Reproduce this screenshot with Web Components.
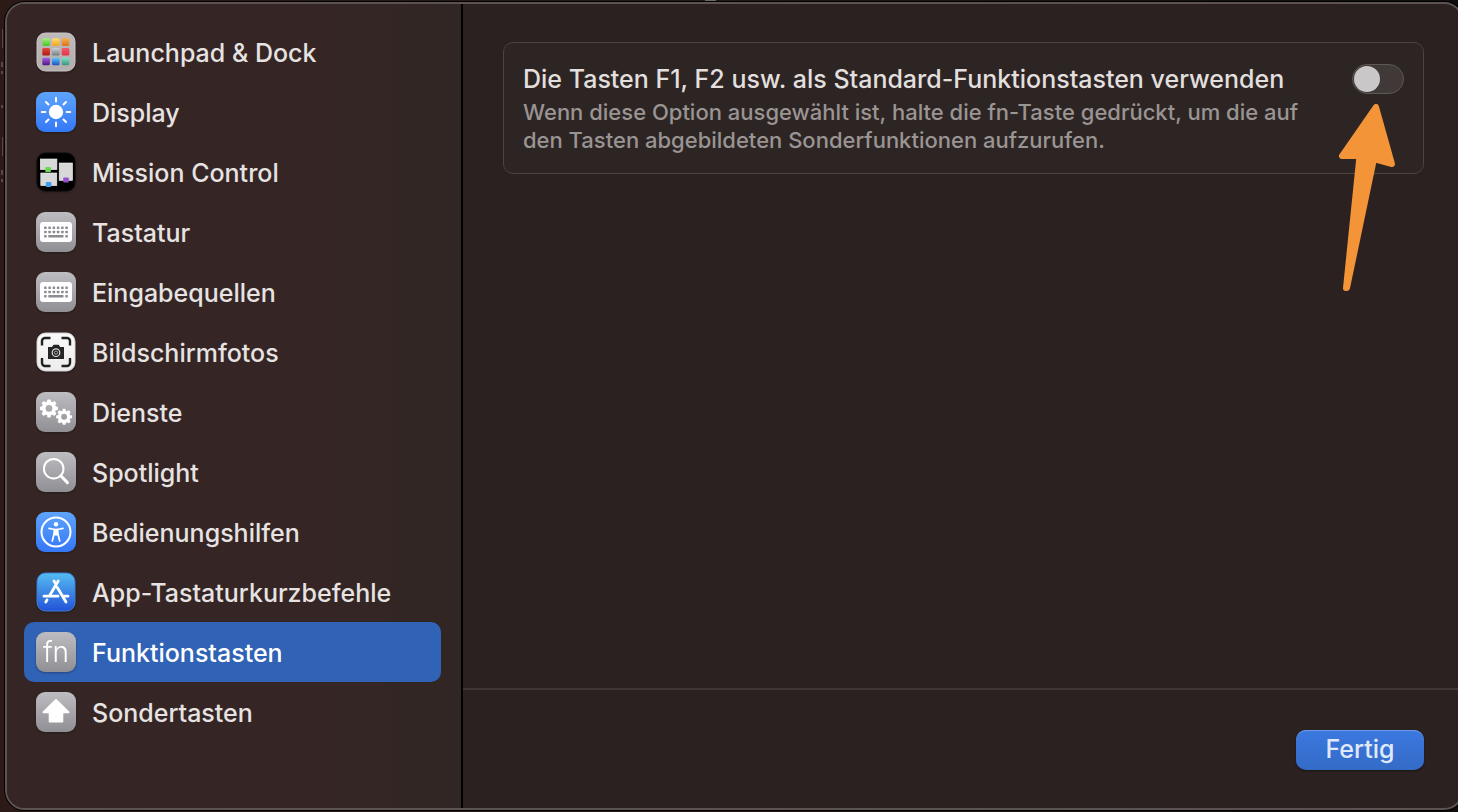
<!DOCTYPE html>
<html lang="de">
<head>
<meta charset="utf-8">
<title>Tastaturkurzbefehle</title>
<style>
  * { box-sizing: border-box; }

  /* the window behind shows through as thin traces at the left and top edge */
  body {
    margin: 0;
    height: 100vh;
    padding: 2px 0 2px 5px;
    overflow: hidden;
    background:
      linear-gradient(#5a4844, #5a4844) 2px 29px / 1px 19px no-repeat,
      linear-gradient(#5a4844, #5a4844) 1px 62px / 2px 5px no-repeat,
      linear-gradient(#5a4844, #5a4844) 1px 71px / 2px 3px no-repeat,
      linear-gradient(#5a4844, #5a4844) 1px 105px / 2px 3px no-repeat,
      linear-gradient(#5a4844, #5a4844) 2px 137px / 1px 19px no-repeat,
      linear-gradient(#5a4844, #5a4844) 1px 170px / 2px 5px no-repeat,
      linear-gradient(#5a4844, #5a4844) 1px 179px / 2px 3px no-repeat,
      linear-gradient(#6a6a66, #6a6a66) 705px 0 / 11px 1px no-repeat,
      linear-gradient(90deg, #2c1a17, #241a18 45%, #0f0d0d);
    font-family: Inter, "Liberation Sans", sans-serif;
    font-weight: 500;
    color: #e6e3e2;
  }
</style>
</head>
<body>

<settings-window>
  <settings-nav slot="sidebar">
    <nav-item icon="launchpad">Launchpad &amp; Dock</nav-item>
    <nav-item icon="display">Display</nav-item>
    <nav-item icon="mission">Mission Control</nav-item>
    <nav-item icon="keyboard">Tastatur</nav-item>
    <nav-item icon="keyboard">Eingabequellen</nav-item>
    <nav-item icon="screenshot">Bildschirmfotos</nav-item>
    <nav-item icon="gears">Dienste</nav-item>
    <nav-item icon="search">Spotlight</nav-item>
    <nav-item icon="access">Bedienungshilfen</nav-item>
    <nav-item icon="appstore">App-Tastaturkurzbefehle</nav-item>
    <nav-item icon="fn" selected>Funktionstasten</nav-item>
    <nav-item icon="shift">Sondertasten</nav-item>
  </settings-nav>

  <toggle-card>
    Die Tasten F1, F2 usw. als Standard-Funktionstasten verwenden
    <span slot="hint">Wenn diese Option ausgewählt ist, halte die fn-Taste gedrückt, um die auf den Tasten abgebildeten Sonderfunktionen aufzurufen.</span>
    <pointer-arrow slot="marker"></pointer-arrow>
  </toggle-card>

  <push-button slot="footer">Fertig</push-button>
</settings-window>

<script>
// eight teeth around a thick ring
function gear(cx, cy, r) {
    let teeth = "";
    for (let i = 0; i < 8; i++) {
        teeth += `<rect x="${cx - r * 0.2}" y="${cy - r}" width="${r * 0.4}" height="${r * 0.5}" rx="${r * 0.1}" transform="rotate(${i * 45} ${cx} ${cy})"/>`;
    }
    return `<g fill="#fff">${teeth}</g>
      <circle cx="${cx}" cy="${cy}" r="${r * 0.58}" fill="none" stroke="#fff" stroke-width="${r * 0.42}"/>`;
}

function launchpadTiles() {
    const colors = [
        ["#a5f07c", "#4cc22f"], ["#ffdc73", "#eea51f"], ["#f8ae4c", "#dc721c"],
        ["#e8473b", "#ab1712"], ["#c9d2d6", "#737a7d"], ["#f7586b", "#e03349"],
        ["#ab5be6", "#4c1784"], ["#5ac8ff", "#1b4fc0"], ["#7ce2cb", "#3a9178"]
    ];
    return colors.map(([top, bottom], i) => {
        const x = 6.3 + (i % 3) * 9.7;
        const y = 6.3 + Math.floor(i / 3) * 9.7;
        return `<linearGradient id="t${i}" x2="0" y2="1"><stop stop-color="${top}"/><stop offset="1" stop-color="${bottom}"/></linearGradient>
          <rect x="${x}" y="${y}" width="7.6" height="7.6" rx="1.4" fill="url(#t${i})"/>`;
    }).join("");
}

function keyboardKeys() {
    let keys = "";
    for (let row = 0; row < 3; row++) {
        for (let col = 0; col < 6; col++) {
            if (row === 2 && col > 0 && col < 5) continue;
            keys += `<rect x="${8.1 + col * 4.25}" y="${14.5 + row * 4.2}" width="2.5" height="2.5" rx=".5"/>`;
        }
    }
    return `<g fill="#8b8b90">${keys}<rect x="12.3" y="22.9" width="15.2" height="2.5" rx=".5"/></g>`;
}

function sunRays() {
    let rays = "";
    for (let i = 0; i < 8; i++) {
        rays += `<path d="M20 5.8v3.6" transform="rotate(${i * 45} 20 20)"/>`;
    }
    return `<g stroke="#fff" stroke-width="2" stroke-linecap="round">${rays}</g>`;
}

const ICONS = {
    launchpad: {
        bg: ["#bebab9", "#b3afae"],
        edge: "#cbc7c6",
        art: launchpadTiles()
    },
    display: {
        bg: ["#5ea3fb", "#3478f6"],
        art: `<circle cx="20" cy="20" r="7.2" fill="#fff"/>${sunRays()}`
    },
    mission: {
        bg: ["#000", "#000"],
        edge: "#0c0a0a",
        art: `<g fill="#d8d8d8" stroke="#f4f4f4" stroke-width=".6">
            <rect x="4.3" y="7" width="16.6" height="10.6"/>
            <rect x="4.8" y="21" width="16" height="12.6"/>
            <rect x="23.2" y="11" width="13.3" height="17.4"/></g>
          <rect x="9.2" y="15" width="5.8" height="5" rx="1" fill="#6bd94f"/>
          <rect x="9.8" y="30" width="5.6" height="5" rx="1" fill="#3f9df0"/>
          <rect x="27.2" y="25.5" width="5.6" height="5" rx="1" fill="#9350cf"/>`
    },
    keyboard: {
        bg: ["#bdbdc1", "#8f8f94"],
        art: `<rect x="4" y="10" width="32" height="20" rx="3" fill="#fff"/>${keyboardKeys()}`
    },
    screenshot: {
        bg: ["#fafafa", "#ececec"],
        edge: "#d4d4d4",
        art: `<path d="M6 13.5V9a3 3 0 0 1 3-3h5.500M25.500 6H31a3 3 0 0 1 3 3v4.500M34 26v5a3 3 0 0 1-3 3h-5.500M14.500 34H9a3 3 0 0 1-3-3v-5" fill="none" stroke="#222" stroke-width="2.4"/>
          <path d="M12 15h4l1.600-2.300h5L24.200 15H28v12H12z" fill="#262626"/>
          <circle cx="20" cy="20.700" r="3.800" fill="#262626" stroke="#ddd" stroke-width="1.200"/>
          <circle cx="20" cy="20.700" r="1.600" fill="none" stroke="#bbb" stroke-width=".8"/>`
    },
    gears: {
        bg: ["#bdbdc1", "#8f8f94"],
        art: gear(13, 16.4, 9) + gear(28.1, 24.8, 8)
    },
    search: {
        bg: ["#bdbdc1", "#8f8f94"],
        art: `<circle cx="17.700" cy="16.700" r="9.800" fill="none" stroke="#fff" stroke-width="2"/>
          <path d="M24.800 23.800l6.600 6.800" stroke="#fff" stroke-width="3" stroke-linecap="round"/>`
    },
    access: {
        bg: ["#5ea3fb", "#3478f6"],
        art: `<circle cx="20" cy="20" r="14.500" fill="none" stroke="#fff" stroke-width="2"/>
          <circle cx="20" cy="12.200" r="2.200" fill="#fff"/>
          <path d="M13 16.400l5.200 1.100h3.600l5.200-1.100" fill="none" stroke="#fff" stroke-width="1.600" stroke-linecap="round"/>
          <path d="M21.500 17.300l.6 5.200 1.600 6.500M18.500 17.300l-.6 5.200-1.600 6.500" fill="none" stroke="#fff" stroke-width="1.700" stroke-linecap="round"/>
          <path d="M18 17h4v6.500h-4z" fill="#fff"/>`
    },
    appstore: {
        bg: ["#55bdf2", "#2352d8"],
        edge: "#3d7fd8",
        art: `<g fill="none" stroke="#fff" stroke-width="2.800" stroke-linecap="round">
            <path d="M22.200 9L13.700 23.500M18 9l2 3.400M21.300 15.500L30 30M8 24.200h14M27.500 24.200H32M11 28l-1.200 2"/></g>`
    },
    fn: {
        bg: ["#bdbdc1", "#8f8f94"],
        art: `<text x="20" y="30" text-anchor="middle" font-size="28" font-weight="300" fill="#fff">fn</text>`
    },
    shift: {
        bg: ["#bdbdc1", "#8f8f94"],
        art: `<path d="M20 8L32.500 20.300H26.300v9.200h-12.600v-9.200H7.500z" fill="#fff" stroke="#fff" stroke-width="2" stroke-linejoin="round"/>`
    }
};

class AppIcon extends HTMLElement {
    constructor() {
        super();
        this.attachShadow({ mode: "open" });
    }

    connectedCallback() {
        const { bg, art, edge } = ICONS[this.getAttribute("name")];
        this.shadowRoot.innerHTML = `
      <style>
        :host { display: block; flex: none; width: 40px; height: 40px; }
        svg { display: block; overflow: visible; filter: drop-shadow(0 1px 1px rgba(0, 0, 0, .3)); }
      </style>
      <svg width="40" height="40" viewBox="0 0 40 40" aria-hidden="true">
        <linearGradient id="bg" x2="0" y2="1"><stop stop-color="${bg[0]}"/><stop offset="1" stop-color="${bg[1]}"/></linearGradient>
        ${edge
            ? `<rect x="1" y="1" width="38" height="38" rx="8.500" fill="url(#bg)" stroke="${edge}"/>`
            : `<rect width="40" height="40" rx="9" fill="url(#bg)"/>`}
        ${art}
      </svg>
    `;
    }
}

class NavItem extends HTMLElement {
    constructor() {
        super();
        this.attachShadow({ mode: "open" });
    }

    connectedCallback() {
        this.shadowRoot.innerHTML = `
      <style>
        :host { display: block; }
        button {
          display: flex;
          align-items: center;
          gap: 16px;
          width: 100%;
          height: 60px;
          padding: 0 12px;
          border: 0;
          border-radius: 10px;
          background: none;
          color: inherit;
          font: inherit;
          font-size: 25px;
          line-height: 32px;
          text-align: left;
          white-space: nowrap;
        }
        span { padding-top: 2px; }
        :host([selected]) button { background: #3062b5; color: #fff; }
      </style>
      <button type="button" ${this.hasAttribute("selected") ? 'aria-current="page"' : ""}>
        <app-icon name="${this.getAttribute("icon")}"></app-icon>
        <span><slot></slot></span>
      </button>
    `;
    }
}

class SettingsNav extends HTMLElement {
    constructor() {
        super();
        this.attachShadow({ mode: "open" });
    }

    connectedCallback() {
        this.shadowRoot.innerHTML = `
      <style>
        :host { display: block; padding: 18px 20px 18px 17px; }
      </style>
      <nav><slot></slot></nav>
    `;
    }
}

class ToggleCard extends HTMLElement {
    constructor() {
        super();
        this.attachShadow({ mode: "open" });
    }

    connectedCallback() {
        this.shadowRoot.innerHTML = `
      <style>
        :host {
          display: flex;
          align-items: flex-start;
          justify-content: space-between;
          gap: 40px;
          padding: 19px;
          border: 1px solid #4a4443;
          border-radius: 10px;
          background: #2d2524;
        }
        label { display: block; font-size: 25px; line-height: 34px; color: #e2dfde; }
        p { margin: 2px 0 0; font-size: 22px; font-weight: 450; line-height: 28px; color: #9a9493; }
        .switch { position: relative; flex: none; height: 34px; display: flex; align-items: center; }
        input {
          appearance: none;
          display: flex;
          align-items: center;
          width: 52px;
          height: 30px;
          margin: 0;
          padding: 0 1px;
          border: 1px solid #5d5756;
          border-radius: 15px;
          background: #403937;
        }
        input::before {
          content: "";
          width: 26px;
          height: 26px;
          border-radius: 50%;
          background: #cac7c8;
        }
        input:checked { justify-content: flex-end; background: #3062b5; }
        /* the marker hangs below the switch, over the card edge */
        ::slotted([slot="marker"]) { position: absolute; top: 42px; right: 8px; }
      </style>
      <div>
        <label for="toggle"><slot></slot></label>
        <p id="hint"><slot name="hint"></slot></p>
      </div>
      <div class="switch">
        <input type="checkbox" role="switch" id="toggle" aria-describedby="hint">
        <slot name="marker"></slot>
      </div>
    `;
    }
}

class PointerArrow extends HTMLElement {
    constructor() {
        super();
        this.attachShadow({ mode: "open" });
    }

    connectedCallback() {
        this.shadowRoot.innerHTML = `
      <style>
        :host { display: block; pointer-events: none; }
        svg { display: block; }
      </style>
      <svg width="58" height="188" viewBox="0 0 58 188" aria-hidden="true">
        <path d="M38 3L4 52H21.500L8 184H9L36 55L54 60z" fill="#f29437" stroke="#f29437" stroke-width="6" stroke-linejoin="round"/>
      </svg>
    `;
    }
}

class PushButton extends HTMLElement {
    constructor() {
        super();
        this.attachShadow({ mode: "open" });
    }

    connectedCallback() {
        this.shadowRoot.innerHTML = `
      <style>
        :host { display: block; }
        button {
          display: block;
          min-width: 128px;
          height: 40px;
          padding: 0 20px 2px;
          border: 0;
          border-radius: 10px;
          background: linear-gradient(#3b78e0, #346bc6);
          box-shadow: inset 0 1px 0 #6a9be9, 0 1px 2px rgba(0, 0, 0, .4);
          color: #e0e9fa;
          font: inherit;
          font-size: 25px;
          line-height: 32px;
        }
      </style>
      <button type="button"><slot></slot></button>
    `;
    }
}

class SettingsWindow extends HTMLElement {
    constructor() {
        super();
        this.attachShadow({ mode: "open" });
    }

    connectedCallback() {
        this.shadowRoot.innerHTML = `
      <style>
        :host {
          box-sizing: border-box;
          display: flex;
          height: 100%;
          margin-right: -6px;
          border: 2px solid #5c5351;
          border-radius: 20px;
          box-shadow: 0 0 0 1px #000;
          background: #2a2120;
          overflow: hidden;
        }
        aside {
          flex: none;
          width: 456px;
          box-sizing: border-box;
          border-right: 2px solid #000;
          background: linear-gradient(90deg, #352625 70%, #302624);
        }
        main { flex: 1; min-width: 0; display: flex; flex-direction: column; }
        section { flex: 1; padding: 38px 38px 38px 40px; }
        footer {
          display: flex;
          justify-content: flex-end;
          padding: 40px 38px 38px;
          border-top: 2px solid #3e3635;
        }
      </style>
      <aside><slot name="sidebar"></slot></aside>
      <main>
        <section><slot></slot></section>
        <footer><slot name="footer"></slot></footer>
      </main>
    `;
    }
}

customElements.define("app-icon", AppIcon);
customElements.define("nav-item", NavItem);
customElements.define("settings-nav", SettingsNav);
customElements.define("pointer-arrow", PointerArrow);
customElements.define("toggle-card", ToggleCard);
customElements.define("push-button", PushButton);
customElements.define("settings-window", SettingsWindow);
</script>
</body>
</html>
